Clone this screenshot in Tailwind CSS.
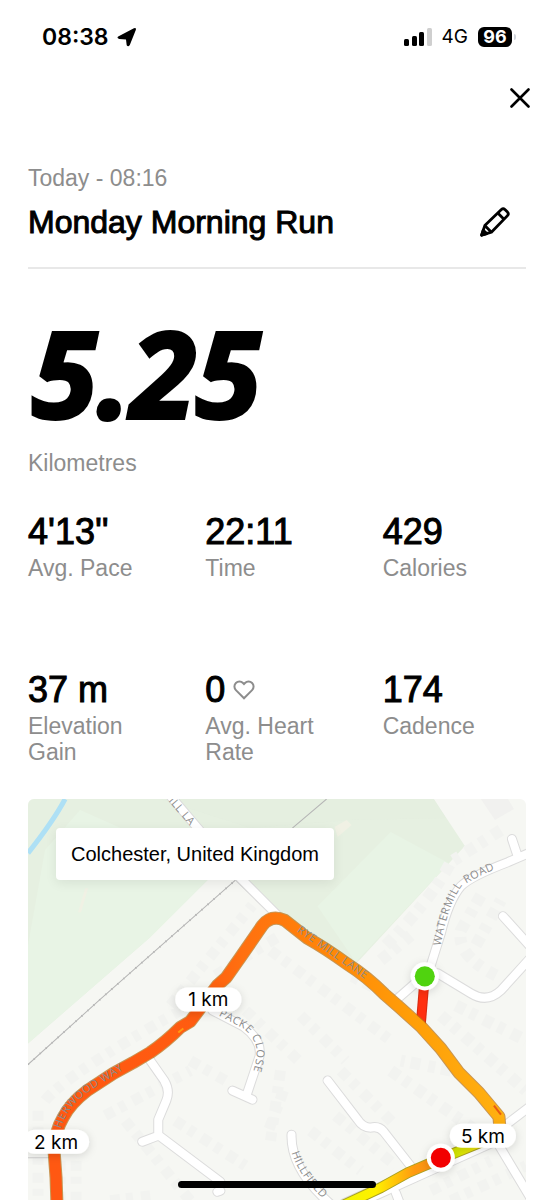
<!DOCTYPE html>
<html lang="en">
  <head>
    <meta charset="UTF-8" />
    <meta name="viewport" content="width=device-width, initial-scale=1.0" />
    <script src="https://cdn.jsdelivr.net/npm/@tailwindcss/browser@4"></script>
    <title>Monday Morning Run</title>
  </head>
  <body class="bg-white text-black font-['Liberation_Sans',Arial,sans-serif]">
    <div class="flex flex-col min-h-screen">
      <!-- Status bar -->
      <div class="flex items-center justify-between h-[74px] pl-[42px] pr-[38px] font-['Inter',sans-serif]">
        <div class="flex items-center gap-2">
          <span class="text-[23px] font-semibold">08:38</span>
          <svg class="w-5 h-5" viewBox="0 0 20 20" aria-hidden="true">
            <path d="M1.2 9.4 16.9 1.2q2.6-.9 1.9 1.7L12.8 18q-1.7 2.6-3.1.2L9 12.4 2.2 11.9Q-.6 10.8 1.2 9.4z" />
          </svg>
        </div>
        <div class="flex items-center gap-2.5">
          <svg class="w-7 h-5" viewBox="0 0 28 20" aria-hidden="true">
            <rect x="0" y="12" width="5" height="7" rx="1.5" />
            <rect x="8" y="9" width="5" height="10" rx="1.5" />
            <rect x="15" y="5" width="5" height="14" rx="1.5" />
            <rect x="23" y="1" width="5" height="18" rx="1.5" fill="#cfcfcf" />
          </svg>
          <span class="text-[19px]">4G</span>
          <div class="flex items-center gap-0.5">
            <span class="w-[34px] h-5 rounded-md bg-black text-white text-center text-[18px] leading-5 font-bold">96</span>
            <span class="w-0.5 h-1.5 rounded-r bg-gray-300"></span>
          </div>
        </div>
      </div>

      <!-- Close -->
      <div class="flex justify-end pr-[22px] h-12 items-center">
        <button type="button" aria-label="Close" class="p-0.5">
          <svg class="w-5 h-5" viewBox="0 0 20 20" fill="none" stroke="#000" stroke-width="2.6" stroke-linecap="round">
            <path d="M1.5 1.5l17 17M18.500 1.5L1.5 18.500" />
          </svg>
        </button>
      </div>

      <main class="flex flex-col grow px-7 pt-[43px]">
        <!-- Title -->
        <header class="border-b-2 border-[#e8e8e8] pb-[25px]">
          <p class="text-[23px] leading-[26px] text-[#8d8d8d]">Today - 08:16</p>
          <div class="flex items-center justify-between pt-[11px] pr-[15px]">
            <h1 class="text-[32px] leading-10 [-webkit-text-stroke:1px_#000]">Monday Morning Run</h1>
            <button type="button" aria-label="Edit name">
              <svg class="w-8 h-8" viewBox="0 0 32 32" fill="none" stroke="#000" stroke-width="2.8" stroke-linejoin="round">
                <path d="M2.6 29.2 5.8 19.600 22.4 3.5q1.800-1.600 3.500 0l2.600 2.600q1.600 1.800 0 3.500L12.4 26.200z" />
                <path d="M18.8 7l6.200 6.200M5.8 19.600l6.600 6.600" />
                <path d="M2.6 29.200l1.600-5 3.600 3.400z" fill="#000" />
              </svg>
            </button>
          </div>
        </header>

        <!-- Distance -->
        <div class="pt-[47px]">
          <p class="pl-1 font-['Open_Sans',sans-serif] font-bold italic text-[118px] leading-[114px] [-webkit-text-stroke:4px_#000]">5.25</p>
          <p class="pt-5 text-[23px] leading-[26px] text-[#8d8d8d]">Kilometres</p>
        </div>

        <!-- Stats -->
        <dl class="grid grid-cols-3 gap-x-[34px] gap-y-[87px] pt-[34px] text-[23px] leading-[26px] text-[#8d8d8d]">
          <div class="flex flex-col-reverse justify-end gap-px">
            <dt>Avg. Pace</dt>
            <dd class="text-4xl leading-11 text-black [-webkit-text-stroke:1px_#000]">4'13''</dd>
          </div>
          <div class="flex flex-col-reverse justify-end gap-px">
            <dt>Time</dt>
            <dd class="text-4xl leading-11 text-black [-webkit-text-stroke:1px_#000]">22:11</dd>
          </div>
          <div class="flex flex-col-reverse justify-end gap-px">
            <dt>Calories</dt>
            <dd class="text-4xl leading-11 text-black [-webkit-text-stroke:1px_#000]">429</dd>
          </div>
          <div class="flex flex-col-reverse justify-end gap-px">
            <dt>Elevation Gain</dt>
            <dd class="text-4xl leading-11 text-black [-webkit-text-stroke:1px_#000]">37 m</dd>
          </div>
          <div class="flex flex-col-reverse justify-end gap-px">
            <dt>Avg. Heart Rate</dt>
            <dd class="flex items-center gap-2 text-4xl leading-11 text-black [-webkit-text-stroke:1px_#000]">
              0
              <svg class="w-[22px] h-[22px]" viewBox="0 0 22 22" fill="none" stroke="#8d8d8d" stroke-width="2" aria-hidden="true">
                <path d="M11 19.3 2.9 11.1a5 5 0 0 1 0-7.1 5 5 0 0 1 7.1 0l1 1 1-1a5 5 0 0 1 7.1 0 5 5 0 0 1 0 7.1z" />
              </svg>
            </dd>
          </div>
          <div class="flex flex-col-reverse justify-end gap-px">
            <dt>Cadence</dt>
            <dd class="text-4xl leading-11 text-black [-webkit-text-stroke:1px_#000]">174</dd>
          </div>
        </dl>

        <!-- Map -->
        <section class="relative grow mt-[34px] min-h-[401px] rounded-t-md overflow-hidden bg-[#f6f7f3]" aria-label="Route map">
          <svg class="absolute inset-0 w-full h-full" viewBox="28 799 497 401" preserveAspectRatio="xMidYMin slice">
            <defs>
              <linearGradient id="route" gradientUnits="userSpaceOnUse" x1="55" y1="0" x2="500" y2="0">
                <stop offset="0" stop-color="#ff5812" />
                <stop offset=".32" stop-color="#ff5c10" />
                <stop offset=".42" stop-color="#ff7010" />
                <stop offset=".6" stop-color="#ff8508" />
                <stop offset=".8" stop-color="#ff9e08" />
                <stop offset="1" stop-color="#ffb010" />
              </linearGradient>
              <linearGradient id="finish" gradientUnits="userSpaceOnUse" x1="345" y1="0" x2="482" y2="0">
                <stop offset="0" stop-color="#f2f500" />
                <stop offset=".22" stop-color="#fff000" />
                <stop offset=".5" stop-color="#ff9a10" />
                <stop offset=".7" stop-color="#f58a15" />
                <stop offset=".8" stop-color="#d3e600" />
                <stop offset="1" stop-color="#f5e010" />
              </linearGradient>
              <filter id="shadow" x="-30%" y="-50%" width="160%" height="220%">
                <feDropShadow dx="0" dy="2" stdDeviation="4" flood-opacity=".14" />
              </filter>
              <path id="watermill" d="M440 946Q446 908 460 887Q472 877 527 856" />
              <path id="ryemill" d="M296 931L390 997" />
              <path id="sherwood" d="M61 1128Q66 1107 90 1090L135 1062" />
              <path id="packe" d="M218 1015L243 1028Q258 1040 256 1056Q254 1070 248 1084" />
              <path id="hillfield" d="M291 1152Q300 1180 334 1208" />
              <path id="topmill" d="M168 801L201 839" />
            </defs>

            <!-- Land -->
            <path fill="#e6f0e1" d="M28 799H433L464 846L355 964L280 914L238 878H209L150 937L28 1043z" />
            <path fill="#e8f4e5" d="M80 810L170 850L209 878L150 937L28 1043V945L45 850zM317 906L390 832L448 863L355 962z" />
            <path fill="#e3eedf" d="M160 799H433L445 818L350 820L250 828z" opacity=".5" />
            <path fill="#f0f1e4" d="M85 888h3l-7 24h-3zM334 827l12-7 5 5-14 12z" />
            <path fill="#f1f1ef" d="M480 799l14 21 19-11-6-10z" />
            <path d="M28 853Q54 820 65 799" fill="none" stroke="#aee0f5" stroke-width="5" />

            <!-- Houses -->
            <g fill="none" stroke="#f2f3f0" stroke-dasharray="10 6 7 8">
              <path stroke-width="11" d="M45 1100Q65 1075 180 1010M170 1005L252 905M105 1115L190 1070M215 975L280 935M270 950L390 1040M245 1010L300 1062M283 1090L268 1130M60 1160v40M38 1110v90M76 1160v40" />
              <path stroke-width="12" d="M385 945Q430 900 450 862L500 830M380 960L410 935M480 895L460 930Q455 955 495 975M475 945L500 900M400 1000L350 975M440 1015L525 1090M450 1070L400 1060M455 1005L525 1040M390 1070L475 1130" />
              <path stroke-width="11" d="M125 1120L190 1200M175 1120L245 1165M190 1060L225 1080M280 1070L270 1140M340 1070L395 1125M335 1115L395 1165M310 1130L360 1170M430 1190L490 1160M450 1200L525 1165M300 1015L345 1060M110 1200L150 1195" />
            </g>

            <!-- Paths -->
            <path d="M28 1064L100 999L235 880L293 827L326 799" fill="none" stroke="#b5b5b5" />
            <path d="M28 1064L100 999L235 880" fill="none" stroke="#b5b5b5" stroke-width="2" stroke-dasharray="1 7" />
            <path d="M235 880L268 912M28 1157H55" fill="none" stroke="#cfcfcf" />

            <!-- Roads -->
            <g fill="none" stroke-linecap="round" stroke-linejoin="round">
              <g stroke="#dcdcdc" stroke-width="10">
                <path d="M165 790L240 878L276 914M430 965L440 933Q448 900 460 886Q470 876 507 862L530 852M517 857L511 839M397 998L420 978L437 973L470 993Q486 1003 500 990L530 957M502 916L530 947" />
                <path d="M150 1060L164 1080Q170 1090 166 1100L158 1119V1135L142 1141M159 1135L220 1181M220 1190L217 1191M212 1010L243 1026Q262 1040 259 1056L246 1095M232 1090L252 1099" />
                <path d="M327 1080L357 1119Q362 1127 370 1127Q378 1125 383 1131L412 1168M291 1134Q290 1170 332 1205M497 1143L530 1198M500 1128L530 1105M395 1192L400 1205" />
                <path stroke-width="16" d="M500 1135L440 1162L345 1205" />
              </g>
              <g stroke="#fff" stroke-width="8">
                <path d="M165 790L240 878L276 914M430 965L440 933Q448 900 460 886Q470 876 507 862L530 852M517 857L511 839M397 998L420 978L437 973L470 993Q486 1003 500 990L530 957M502 916L530 947" />
                <path d="M150 1060L164 1080Q170 1090 166 1100L158 1119V1135L142 1141M159 1135L220 1181M220 1190L217 1191M212 1010L243 1026Q262 1040 259 1056L246 1095M232 1090L252 1099" />
                <path d="M327 1080L357 1119Q362 1127 370 1127Q378 1125 383 1131L412 1168M291 1134Q290 1170 332 1205M497 1143L530 1198M500 1128L530 1105M395 1192L400 1205" />
                <path stroke-width="14" d="M500 1135L440 1162L345 1205" />
              </g>
            </g>

            <!-- Route -->
            <g fill="none" stroke-linejoin="round">
              <path d="M423 988L420 1024" stroke="#d62a10" stroke-width="10" />
              <path d="M423 988L420 1024" stroke="#ff3010" stroke-width="8" />
              <path d="M57 1206L56 1177L54 1150Q55 1130 63 1117Q70 1103 87 1090L113 1073L133 1062L150 1052Q165 1042 180 1027L190 1021L217 985L226 977L240 957L262 925Q271 914 284 920L307 938Q325 948 347 964Q366 976 384 994L400 1008L420 1026L440 1048L458 1072L478 1092L498 1116L499 1128" stroke="#b8741c" stroke-opacity=".75" stroke-width="13" />
              <path d="M57 1206L56 1177L54 1150Q55 1130 63 1117Q70 1103 87 1090L113 1073L133 1062L150 1052Q165 1042 180 1027L190 1021L217 985L226 977L240 957L262 925Q271 914 284 920L307 938Q325 948 347 964Q366 976 384 994L400 1008L420 1026L440 1048L458 1072L478 1092L498 1116L499 1128" stroke="url(#route)" stroke-width="11" />
              <path d="M484 1140L440 1158L407 1172L380 1187L335 1208" stroke="#a8a020" stroke-width="11" />
              <path d="M484 1140L440 1158L407 1172L380 1187L335 1208" stroke="url(#finish)" stroke-width="9" />
              <path d="M178 1032l5-4" stroke="#ff9a10" stroke-width="2" />
              <path d="M493 1105l7 9" stroke="#e85a10" stroke-width="2" />
            </g>

            <!-- Street names -->
            <g class="font-['Open_Sans',sans-serif] text-[11px] tracking-wider" fill="#8c8c8c">
              <text><textPath href="#watermill">WATERMILL ROAD</textPath></text>
              <text><textPath href="#ryemill">RYE MILL LANE</textPath></text>
              <text><textPath href="#sherwood">HERWOOD WAY</textPath></text>
              <text><textPath href="#packe">PACKE CLOSE</textPath></text>
              <text><textPath href="#hillfield">HILLFIELD</textPath></text>
              <text><textPath href="#topmill">ILL LA</textPath></text>
            </g>

            <!-- Markers -->
            <circle cx="424" cy="976" r="14" fill="#fff" filter="url(#shadow)" />
            <circle cx="424" cy="976" r="10" fill="#50d30f" />
            <g class="font-['Inter',sans-serif] text-[19px]" text-anchor="middle">
              <rect x="175" y="987" width="66" height="24" rx="12" fill="#fff" filter="url(#shadow)" />
              <text x="208" y="1006">1 km</text>
              <rect x="23" y="1129" width="66" height="24" rx="12" fill="#fff" filter="url(#shadow)" />
              <text x="56" y="1148">2 km</text>
              <rect x="449" y="1123" width="66" height="24" rx="12" fill="#fff" filter="url(#shadow)" />
              <text x="482" y="1142">5 km</text>
            </g>
            <circle cx="440" cy="1157" r="14" fill="#fff" filter="url(#shadow)" />
            <circle cx="440" cy="1157" r="10" fill="#f20000" />
          </svg>
          <p class="absolute left-7 top-[29px] px-[15px] rounded-sm bg-white text-xl leading-[52px] shadow-[0_3px_12px_rgba(0,0,0,0.08)]">Colchester, United Kingdom</p>
        </section>
      </main>
    </div>

    <!-- Home indicator -->
    <div class="fixed bottom-3 left-1/2 -translate-x-1/2 w-[198px] h-[7px] rounded-full bg-black"></div>
  </body>
</html>
